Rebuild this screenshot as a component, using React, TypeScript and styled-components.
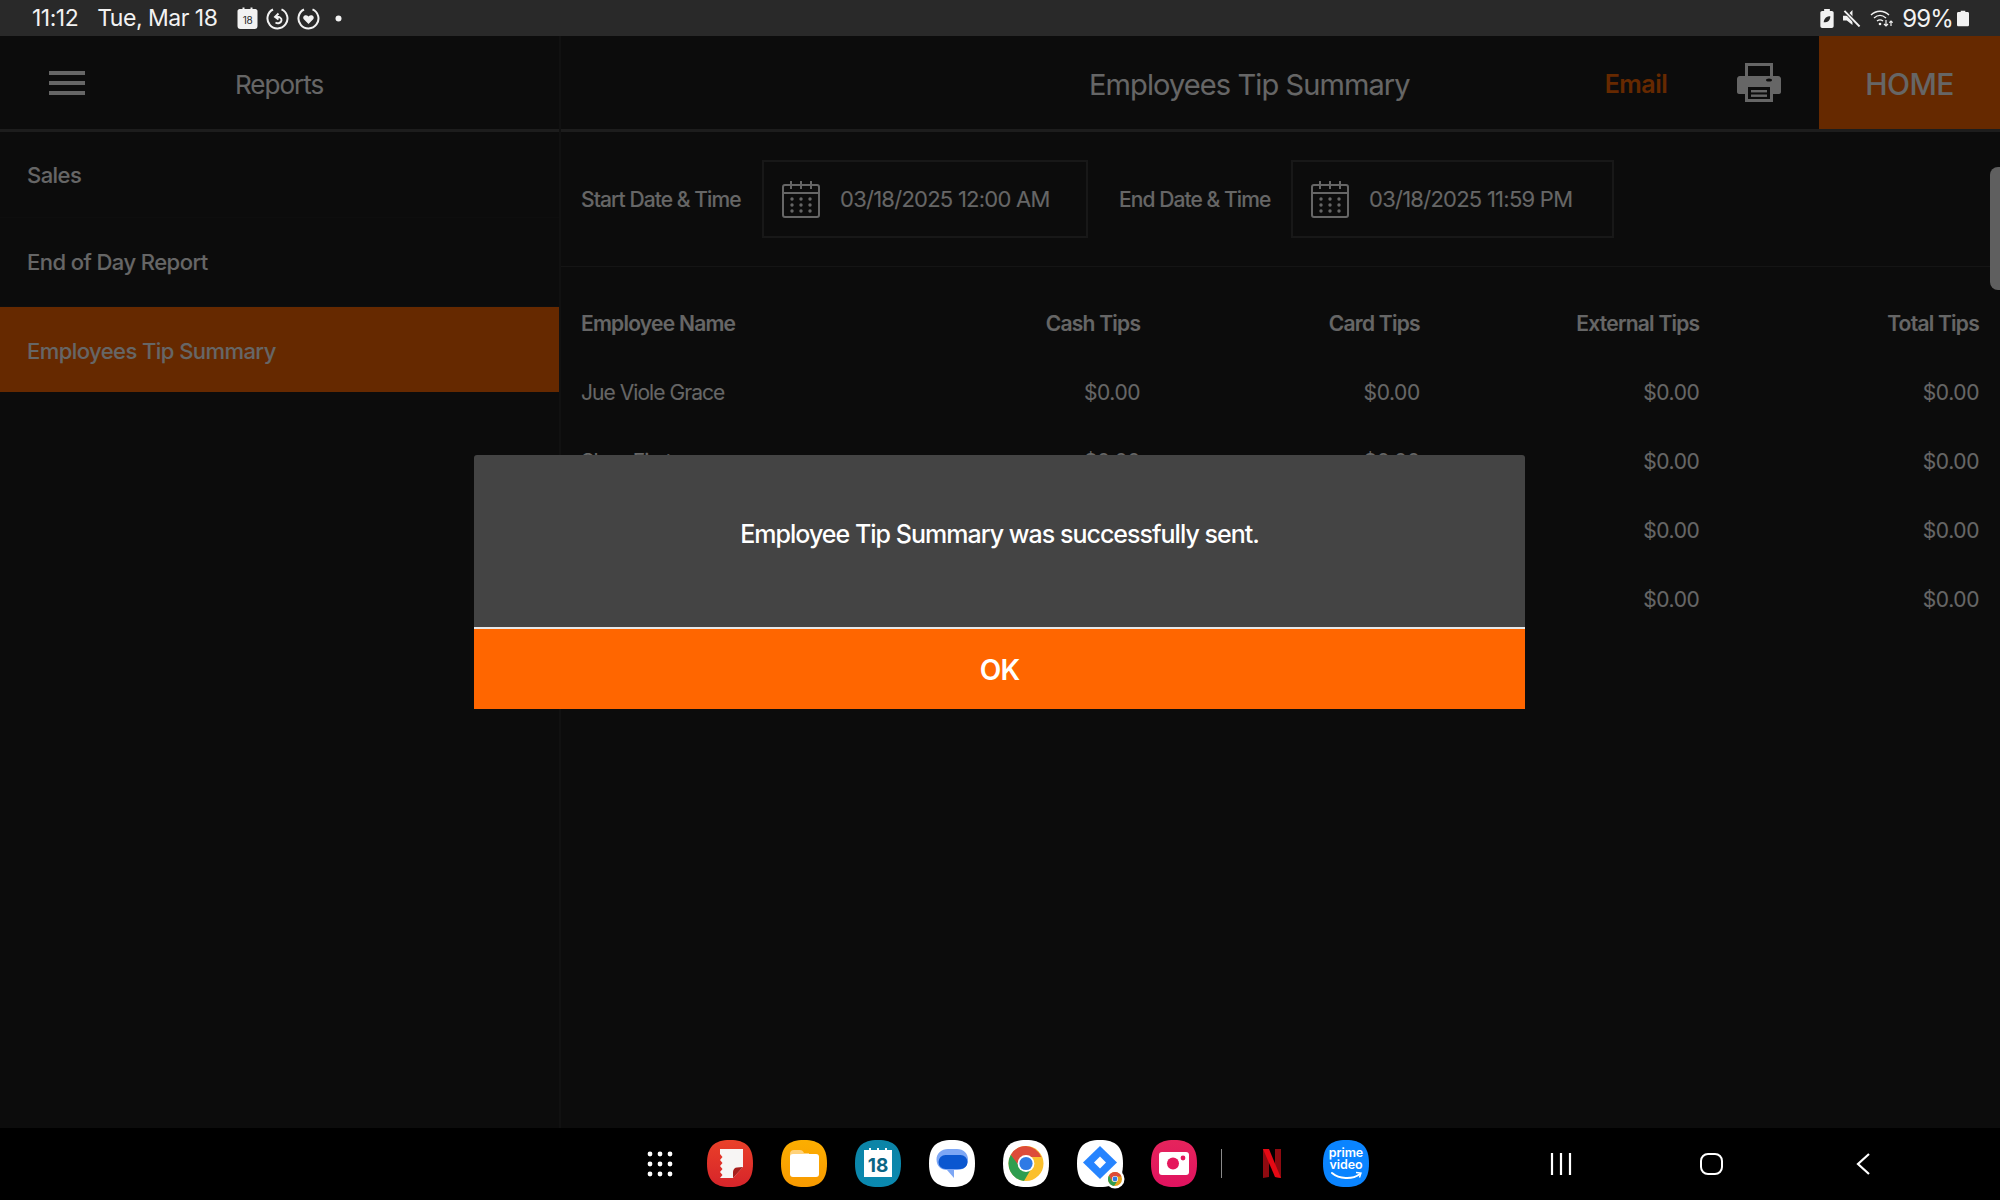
import React from "react";
import styled, { createGlobalStyle } from "styled-components";

const Global = createGlobalStyle`
  html, body { margin: 0; padding: 0; background: #000; }
  body { font-family: Inter, Roboto, "Liberation Sans", sans-serif; }
  * { box-sizing: border-box; }
`;

const Screen = styled.div`
  width: 2000px;
  height: 1200px;
  display: flex;
  flex-direction: column;
  overflow: hidden;
  background: #000;
`;

const StatusBar = styled.div`
  height: 36px;
  flex: none;
  background: #292929;
  color: #f2f2f2;
  font-size: 23px;
  letter-spacing: -0.5px;
  display: flex;
  align-items: center;
  padding: 0 31px 0 32px;
`;
const StatusGroup = styled.div<{ $gap?: number }>`
  display: flex;
  align-items: center;
  gap: ${(p) => p.$gap ?? 6}px;
`;
const Spacer = styled.div`
  flex: 1;
`;
const StatusClock = styled.span`
  margin-right: 19px;
`;
const StatusDate = styled.span`
  margin-right: 20px;
`;
const BatteryText = styled.span`
  margin-left: 8px;
  margin-right: 4px;
  font-size: 24px;
  letter-spacing: -0.9px;
`;

const Main = styled.div`
  position: relative;
  flex: 1;
  min-height: 0;
  display: flex;
  background: #1e1e1e;
  color: #fff;
`;

const Sidebar = styled.aside`
  width: 561px;
  flex: none;
  border-right: 2px solid #2c2c2c;
  display: flex;
  flex-direction: column;
`;
const SideHead = styled.div`
  height: 96px;
  flex: none;
  border-bottom: 3px solid #4a4a4a;
  display: flex;
  align-items: center;
  padding-left: 49px;
`;
const Burger = styled.div`
  width: 36px;
  display: flex;
  flex-direction: column;
  gap: 6px;
  & > i {
    display: block;
    height: 4px;
    background: #fff;
  }
`;
const SideTitle = styled.div`
  font-size: 26px;
  letter-spacing: -1px;
  margin-left: 150px;
  padding-top: 4px;
`;
const SideItem = styled.div<{ $h: number; $pt: number; $active?: boolean }>`
  height: ${(p) => p.$h}px;
  display: flex;
  align-items: center;
  padding-left: 27px;
  padding-top: ${(p) => p.$pt}px;
  font-size: 22px;
  font-weight: 500;
  letter-spacing: -0.56px;
  background: ${(p) => (p.$active ? "#ff6600" : "transparent")};
  border-bottom: ${(p) => (p.$active ? "none" : "1px solid #242424")};
`;

const Content = styled.section`
  flex: 1;
  min-width: 0;
  position: relative;
  display: flex;
  flex-direction: column;
`;
const TopBar = styled.div`
  height: 96px;
  flex: none;
  border-bottom: 3px solid #4a4a4a;
  display: flex;
  align-items: stretch;
`;
const TopTitle = styled.div`
  font-size: 29px;
  letter-spacing: -0.9px;
  align-self: center;
  margin-left: 528px;
  padding-top: 4px;
  white-space: nowrap;
`;
const EmailLink = styled.div`
  font-size: 25px;
  font-weight: 600;
  letter-spacing: -0.5px;
  color: #ff6600;
  align-self: center;
  margin-left: 195px;
  padding-top: 2px;
`;
const PrintSlot = styled.div`
  align-self: center;
  margin-left: 70px;
  display: flex;
  padding-top: 1px;
`;
const HomeButton = styled.div`
  margin-left: auto;
  width: 181px;
  background: #ff6600;
  display: flex;
  align-items: center;
  justify-content: center;
  font-size: 30px;
  font-weight: 500;
  letter-spacing: -0.6px;
  padding-top: 3px;
`;

const FilterRow = styled.div`
  height: 135px;
  flex: none;
  border-bottom: 1px solid #363636;
  display: flex;
  align-items: flex-start;
  padding: 28px 0 0 20px;
`;
const FilterLabel = styled.div<{ $w: number }>`
  width: ${(p) => p.$w}px;
  height: 78px;
  display: flex;
  align-items: center;
  font-size: 21px;
  font-weight: 500;
  letter-spacing: -0.92px;
  white-space: nowrap;
`;
const DateField = styled.div<{ $w: number; $mr: number }>`
  width: ${(p) => p.$w}px;
  margin-right: ${(p) => p.$mr}px;
  height: 78px;
  border: 2px solid #3c3c3c;
  display: flex;
  align-items: center;
  padding-left: 18px;
  gap: 20px;
  font-size: 22px;
  letter-spacing: -0.75px;
  white-space: nowrap;
`;

const Table = styled.div`
  padding: 21px 21px 0 20px;
`;
const Row = styled.div<{ $head?: boolean }>`
  height: ${(p) => (p.$head ? 70 : 69)}px;
  display: grid;
  grid-template-columns: repeat(5, 1fr);
  align-items: center;
  font-size: 21px;
  font-weight: ${(p) => (p.$head ? 600 : 400)};
  letter-spacing: ${(p) => (p.$head ? "-0.75px" : "-0.95px")};
`;
const Cell = styled.div<{ $right?: boolean }>`
  text-align: ${(p) => (p.$right ? "right" : "left")};
  white-space: nowrap;
`;
const Amount = styled(Cell)`
  letter-spacing: -0.4px;
`;

const ScrollThumb = styled.div`
  position: absolute;
  right: 0;
  top: 131px;
  width: 10px;
  height: 123px;
  border-radius: 8px 0 0 8px;
  background: #ededed;
`;

const Overlay = styled.div`
  position: absolute;
  inset: 0;
  background: rgba(0, 0, 0, 0.6);
  display: flex;
  align-items: center;
  justify-content: center;
`;
const Dialog = styled.div`
  width: 1051px;
  height: 254px;
  margin-right: 1px;
  display: flex;
  flex-direction: column;
  background: #444444;
  border-radius: 3px 3px 0 0;
`;
const DialogBody = styled.div`
  height: 174px;
  flex: none;
  border-bottom: 2px solid #e8e8e8;
  display: flex;
  justify-content: center;
  padding-top: 64px;
  font-size: 25px;
  font-weight: 500;
  letter-spacing: -0.98px;
  line-height: 30px;
  color: #fff;
`;
const DialogButton = styled.div`
  flex: 1;
  background: #ff6600;
  color: #fff;
  display: flex;
  align-items: center;
  justify-content: center;
  font-size: 28px;
  font-weight: 600;
  letter-spacing: -0.8px;
  padding-top: 1px;
`;

const Dock = styled.div`
  height: 72px;
  flex: none;
  background: #000;
  display: flex;
  align-items: flex-start;
  padding: 12px 0 0 647px;
`;
const DockApps = styled.div`
  display: flex;
  align-items: center;
  gap: 28px;
  margin-left: 32px;
`;
const DockDivider = styled.div`
  width: 1px;
  height: 29px;
  background: #8a8a8a;
  margin-left: -4px;
`;
const NetflixSlot = styled.div`
  display: flex;
  margin: 0 14px 0 13px;
`;
const NavSlot = styled.div<{ $ml?: number }>`
  margin-left: ${(p) => p.$ml ?? 0}px;
  height: 47px;
  display: flex;
  align-items: center;
`;

const squircle =
  "M23 0C39 0 46 7 46 23.5C46 40 39 47 23 47C7 47 0 40 0 23.5C0 7 7 0 23 0Z";

const Squircle: React.FC<{
  id: string;
  children: React.ReactNode;
  fill: string;
  fill2?: string;
  over?: React.ReactNode;
}> = ({ id, fill, fill2, children, over }) => (
  <svg width="46" height="47" viewBox="0 0 46 47" overflow="visible">
    <defs>
      <clipPath id={id}>
        <path d={squircle} />
      </clipPath>
      <linearGradient id={`${id}-g`} x1="0" y1="0" x2="0" y2="1">
        <stop offset="0" stopColor={fill} />
        <stop offset="1" stopColor={fill2 ?? fill} />
      </linearGradient>
    </defs>
    <g clipPath={`url(#${id})`}>
      <rect width="46" height="47" fill={`url(#${id}-g)`} />
      {children}
    </g>
    {over}
  </svg>
);

const AppGrid = () => (
  <svg width="28" height="28" viewBox="0 0 28 28" fill="#fff">
    {[4, 14, 24].flatMap((y) => [3, 13, 23].map((x) => <circle key={`${x}-${y}`} cx={x} cy={y} r="2.4" />))}
  </svg>
);

const NotesIcon = () => (
  <Squircle id="n" fill="#ea4029" fill2="#d6242a">
    <path d="M13 9H36V27L26 38H13L15.5 35L13 32L15.5 29L13 26L15.5 23L13 20L15.5 17L13 14Z" fill="#f7f5f4" />
    <path d="M36 27L26 38V32C26 29.5 28 27.5 30 27.5Z" fill="#a81e1c" />
  </Squircle>
);
const FilesIcon = () => (
  <Squircle id="f" fill="#fcae00" fill2="#f89a00">
    <path d="M9 14C9 11.5 10.5 10 13 10H19C21 10 22 11 23 13H28V18H9Z" fill="#ffd27a" />
    <rect x="9" y="14" width="29" height="23" rx="3" fill="#fff" />
  </Squircle>
);
const CalendarApp = () => (
  <Squircle id="c" fill="#0c84a6" fill2="#0a89b0">
    <path d="M9 10H14V8H16V10H22V8H24V10H30V8H32V10H37V37H9Z" fill="#fff" />
    <text x="23" y="32" textAnchor="middle" fontSize="19" fontWeight="700" fontFamily="Inter, sans-serif" fill="#0a6585">18</text>
  </Squircle>
);
const MessagesIcon = () => (
  <Squircle id="m" fill="#fff">
    <path d="M19 9H28C34.5 9 39 13.5 39 19.5C39 26 34.5 30 28 30H25V38L18 30C12 30 7.5 26 7.5 19.5C7.5 13.5 12.5 9 19 9Z" fill="#7da7f5" />
    <rect x="9.5" y="15" width="29" height="14" rx="7" fill="#0b57d0" />
  </Squircle>
);
const ChromeIcon = () => (
  <Squircle id="ch" fill="#fff">
    <circle cx="23" cy="23.5" r="17.5" fill="#fbc02d" />
    <path d="M23 6A17.5 17.5 0 0 0 7.8 14.8L16 29L23 17H38.2A17.5 17.5 0 0 0 23 6Z" fill="#dd4b39" />
    <path d="M7.8 14.8A17.5 17.5 0 0 0 21 40.9L29.5 26.5H16.5Z" fill="#2f9e4f" />
    <circle cx="23" cy="23.5" r="8.4" fill="#fff" />
    <circle cx="23" cy="23.5" r="6.6" fill="#2f7ae5" />
  </Squircle>
);
const JiraIcon = () => (
  <Squircle
    id="j"
    fill="#fff"
    over={
      <g>
        <circle cx="38" cy="39" r="9.5" fill="#fff" />
        <circle cx="38" cy="39" r="7" fill="#e4a11b" />
        <path d="M38 32A7 7 0 0 0 32 35.5L35.2 40.8L38 36.5H44.3A7 7 0 0 0 38 32Z" fill="#dd4b39" />
        <path d="M32 35.5A7 7 0 0 0 37 46L40 41.5H35.2Z" fill="#2f9e4f" />
        <circle cx="38" cy="39" r="3" fill="#fff" />
        <circle cx="38" cy="39" r="2.4" fill="#2f7ae5" />
      </g>
    }
  >
    <path d="M23 6L40 22.5L23 39L6 22.5Z" fill="#2684ff" />
    <path d="M23 16.5L29 22.5L23 28.5L17 22.5Z" fill="#fff" />
  </Squircle>
);
const CameraIcon = () => (
  <Squircle id="cam" fill="#e5245c" fill2="#e0125f">
    <rect x="8" y="12" width="30" height="23" rx="3" fill="#fff" />
    <circle cx="22" cy="23.5" r="6" fill="#e5175c" />
    <circle cx="32" cy="18" r="2.4" fill="#e5175c" />
  </Squircle>
);
const NetflixIcon = () => (
  <svg width="18" height="29" viewBox="0 0 18 29">
    <path d="M0 0H6V28L0 29Z" fill="#8f0a10" />
    <path d="M12 0H18V29L12 28Z" fill="#8f0a10" />
    <path d="M0 0H6L18 29L12 28Z" fill="#e50914" />
  </svg>
);
const PrimeIcon = () => (
  <Squircle id="p" fill="#0a84ff">
    <text x="23" y="16.5" textAnchor="middle" fontSize="12.5" fontWeight="600" letterSpacing="-0.1" fontFamily="Inter, sans-serif" fill="#fff">prime</text>
    <text x="23" y="29" textAnchor="middle" fontSize="12.5" fontWeight="600" letterSpacing="-0.1" fontFamily="Inter, sans-serif" fill="#fff">video</text>
    <path d="M9 33C16 39 29 40 37 34" fill="none" stroke="#fff" strokeWidth="2" strokeLinecap="round" />
    <path d="M33 32.5L38 33L36.5 37.5" fill="none" stroke="#fff" strokeWidth="1.4" />
  </Squircle>
);

const DateIcon = () => (
  <svg width="38" height="38" viewBox="0 0 38 38" fill="none" stroke="#fff" strokeWidth="2">
    <rect x="1" y="5" width="36" height="32" rx="2" />
    <path d="M1 13H37M9 1V9M19 1V9M29 1V9" />
    <g fill="#fff" stroke="none">
      {[19, 25, 31].flatMap((y) => [10, 19, 28].map((x) => <circle key={`${x}-${y}`} cx={x} cy={y} r="1.7" />))}
    </g>
  </svg>
);

const PrinterIcon = () => (
  <svg width="44" height="40" viewBox="0 0 44 40" fill="#fff">
    <path fillRule="evenodd" d="M8 0H36V13H41C43 13 44 14.5 44 16V29C44 30 43 31 42 31H36V39H8V31H2C1 31 0 30 0 29V16C0 14.5 1 13 3 13H8ZM11 3V13H33V3ZM11 24V36H33V24Z" />
    <rect x="14" y="27" width="16" height="2.4" />
    <rect x="14" y="31.5" width="16" height="2.4" />
    <ellipse cx="32" cy="17" rx="3" ry="1.6" fill="#1e1e1e" />
  </svg>
);

const CalendarBadge = () => (
  <svg width="21" height="22" viewBox="0 0 20 22">
    <path d="M2 2H5V0.5H7V2H13V0.5H15V2H18C19 2 20 3 20 4V19C20 21 19 22 17 22H3C1 22 0 21 0 19V4C0 3 1 2 2 2Z" fill="#f2f2f2" />
    <text x="10" y="17" textAnchor="middle" fontSize="10" fontFamily="Inter, sans-serif" fill="#292929">18</text>
  </svg>
);
const RingIcon: React.FC<{ heart?: boolean }> = ({ heart }) => (
  <svg width="23" height="23" viewBox="0 0 23 23" fill="none" stroke="#f2f2f2" strokeWidth="2">
    <path d="M15.5 2.3A10 10 0 1 1 7 2.5" />
    {heart ? (
      <path d="M11.5 17L6.8 12.2C4.8 9.5 8.6 6.6 11.5 9.4C14.4 6.6 18.2 9.5 16.2 12.2Z" fill="#f2f2f2" stroke="none" />
    ) : (
      <path d="M12.5 6.5L9 10L12.5 12.5M9.5 10.2C13 9 16 11 15.5 13.5C15 16 12 17 9.5 15.5" strokeWidth="1.9" />
    )}
  </svg>
);
const Dot = () => (
  <svg width="7" height="7" viewBox="0 0 7 7">
    <circle cx="3.5" cy="3.5" r="3" fill="#f2f2f2" />
  </svg>
);
const DotSlot = styled.div`
  display: flex;
  margin-left: 7px;
`;
const LeafBattery = () => (
  <svg width="14" height="19" viewBox="0 0 14 20">
    <path d="M4 0H10V2H12C13.2 2 14 2.8 14 4V18C14 19.2 13.2 20 12 20H2C.8 20 0 19.2 0 18V4C0 2.8.8 2 2 2H4Z" fill="#f2f2f2" />
    <path d="M3.5 14C4 9 7 7.5 10.5 7.5C10.5 11.5 8.5 14 3.5 14Z" fill="#292929" />
  </svg>
);
const MuteIcon = () => (
  <svg width="18" height="17" viewBox="0 0 19 18">
    <path d="M0 6H4L10 0V16L4 11H0Z" fill="#f2f2f2" />
    <path d="M2 1L17 17" stroke="#292929" strokeWidth="4" />
    <path d="M1.5 1L17.5 17.5" stroke="#f2f2f2" strokeWidth="2" />
  </svg>
);
const WifiIcon = () => (
  <svg width="24" height="18" viewBox="0 0 24 18" fill="none" stroke="#f2f2f2" strokeWidth="1.4">
    <path d="M1 6C6 1 14 1 19 6M4 9C8 5.5 12 5.5 16 9M7 12C9 10.5 11 10.5 13 12" />
    <circle cx="10" cy="15" r="1.3" fill="#f2f2f2" stroke="none" />
    <path d="M16 11V17M14 15L16 17L18 15M21 17V12M19.3 13.7L21 12L22.7 13.7" strokeWidth="1.2" />
  </svg>
);
const BatteryIcon = () => (
  <svg width="12" height="17" viewBox="0 0 13 17">
    <path d="M4 0H9V1.5H11.5C12.3 1.5 13 2.2 13 3V15.5C13 16.3 12.3 17 11.5 17H1.5C.7 17 0 16.3 0 15.5V3C0 2.2.7 1.5 1.5 1.5H4Z" fill="#f2f2f2" />
  </svg>
);

const rows = ["Jue Viole Grace", "Shun First", "", ""];

export default function App() {
  return (
    <Screen>
      <Global />
      <StatusBar>
        <StatusClock>11:12</StatusClock>
        <StatusDate>Tue, Mar 18</StatusDate>
        <StatusGroup $gap={8}>
          <CalendarBadge />
          <RingIcon />
          <RingIcon heart />
          <DotSlot>
            <Dot />
          </DotSlot>
        </StatusGroup>
        <Spacer />
        <StatusGroup $gap={9}>
          <LeafBattery />
          <MuteIcon />
          <WifiIcon />
        </StatusGroup>
        <BatteryText>99%</BatteryText>
        <BatteryIcon />
      </StatusBar>
      <Main>
        <Sidebar>
          <SideHead>
            <Burger>
              <i />
              <i />
              <i />
            </Burger>
            <SideTitle>Reports</SideTitle>
          </SideHead>
          <SideItem $h={86} $pt={1}>Sales</SideItem>
          <SideItem $h={89} $pt={0}>End of Day Report</SideItem>
          <SideItem $h={85} $pt={3} $active>Employees Tip Summary</SideItem>
        </Sidebar>
        <Content>
          <TopBar>
            <TopTitle>Employees Tip Summary</TopTitle>
            <EmailLink>Email</EmailLink>
            <PrintSlot>
              <PrinterIcon />
            </PrintSlot>
            <HomeButton>HOME</HomeButton>
          </TopBar>
          <FilterRow>
            <FilterLabel $w={181}>Start Date &amp; Time</FilterLabel>
            <DateField $w={326} $mr={31}>
              <DateIcon />
              03/18/2025 12:00 AM
            </DateField>
            <FilterLabel $w={172}>End Date &amp; Time</FilterLabel>
            <DateField $w={323} $mr={0}>
              <DateIcon />
              03/18/2025 11:59 PM
            </DateField>
          </FilterRow>
          <Table>
            <Row $head>
              <Cell>Employee Name</Cell>
              <Cell $right>Cash Tips</Cell>
              <Cell $right>Card Tips</Cell>
              <Cell $right>External Tips</Cell>
              <Cell $right>Total Tips</Cell>
            </Row>
            {rows.map((name, i) => (
              <Row key={i}>
                <Cell>{name}</Cell>
                <Amount $right>$0.00</Amount>
                <Amount $right>$0.00</Amount>
                <Amount $right>$0.00</Amount>
                <Amount $right>$0.00</Amount>
              </Row>
            ))}
          </Table>
          <ScrollThumb />
        </Content>
        <Overlay>
          <Dialog>
            <DialogBody>Employee Tip Summary was successfully sent.</DialogBody>
            <DialogButton>OK</DialogButton>
          </Dialog>
        </Overlay>
      </Main>
      <Dock>
        <NavSlot>
          <AppGrid />
        </NavSlot>
        <DockApps>
          <NotesIcon />
          <FilesIcon />
          <CalendarApp />
          <MessagesIcon />
          <ChromeIcon />
          <JiraIcon />
          <CameraIcon />
          <DockDivider />
          <NetflixSlot>
            <NetflixIcon />
          </NetflixSlot>
          <PrimeIcon />
        </DockApps>
        <NavSlot $ml={181}>
          <svg width="22" height="22" viewBox="0 0 22 22" stroke="#fff" strokeWidth="2.2">
            <path d="M2 0V22M11 0V22M20 0V22" />
          </svg>
        </NavSlot>
        <NavSlot $ml={128}>
          <svg width="23" height="22" viewBox="0 0 23 22" fill="none" stroke="#fff" strokeWidth="2">
            <rect x="1" y="1" width="21" height="20" rx="7" />
          </svg>
        </NavSlot>
        <NavSlot $ml={133}>
          <svg width="14" height="22" viewBox="0 0 14 22" fill="none" stroke="#fff" strokeWidth="2.2">
            <path d="M13 1L2 11L13 21" />
          </svg>
        </NavSlot>
      </Dock>
    </Screen>
  );
}
